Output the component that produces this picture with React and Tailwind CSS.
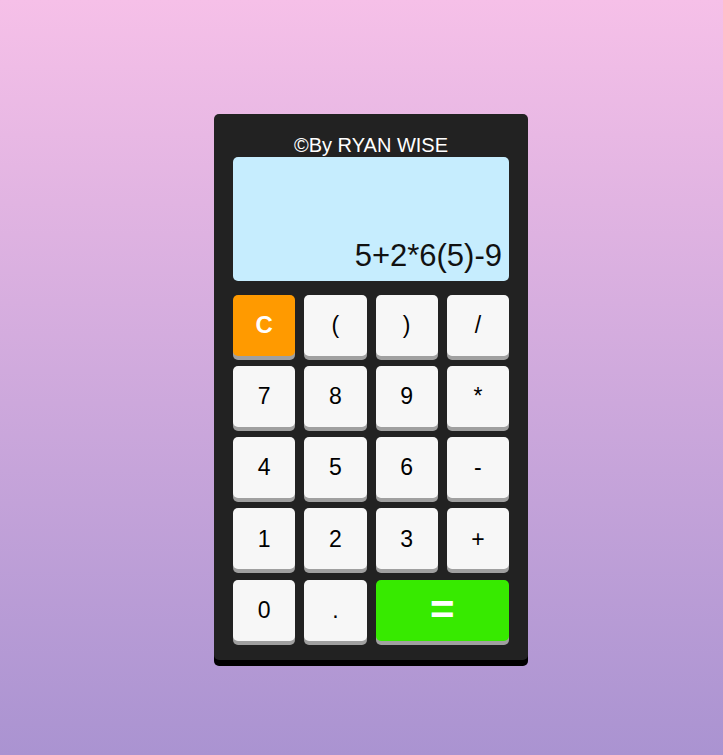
import React from "react";

const keys = [
  { l: "C", t: "op" },
  { l: "(" },
  { l: ")" },
  { l: "/" },
  { l: "7" },
  { l: "8" },
  { l: "9" },
  { l: "*" },
  { l: "4" },
  { l: "5" },
  { l: "6" },
  { l: "-" },
  { l: "1" },
  { l: "2" },
  { l: "3" },
  { l: "+" },
  { l: "0" },
  { l: "." },
  { l: "=", t: "eq" },
];

function Key({ k }) {
  if (k.t === "op") {
    return (
      <button className="h-[61px] rounded-[5px] bg-[#ff9a00] text-white font-bold text-[24px] shadow-[0_4px_0_#a0a0a0] flex items-center justify-center">
        {k.l}
      </button>
    );
  }
  if (k.t === "eq") {
    return (
      <button className="col-span-2 h-[61px] rounded-[5px] bg-[#37ea00] text-white font-bold text-[42px] leading-none shadow-[0_4px_0_#a0a0a0] flex items-center justify-center">
        {k.l}
      </button>
    );
  }
  return (
    <button className="h-[61px] rounded-[5px] bg-[#f7f7f7] text-black text-[23px] shadow-[0_4px_0_#a0a0a0] flex items-center justify-center">
      {k.l}
    </button>
  );
}

export default function App() {
  return (
    <div
      className="min-h-screen w-full bg-gradient-to-b from-[#f6c0e8] to-[#aa93d1] flex justify-center items-start pl-[19px] pt-[114px]"
      style={{ fontFamily: '"Liberation Sans", Arial, sans-serif' }}
    >
      <div className="w-[314px] bg-[#222222] rounded-[5px] shadow-[0_6px_0_#000] px-[19px] pt-[20px] pb-[19px] flex flex-col">
        <div className="text-white text-[20px] text-center leading-[22.5px]">©By RYAN WISE</div>
        <div className="h-[124px] bg-[#c6edfe] rounded-[5px] flex items-end justify-end pr-[7px] pb-[8px]">
          <span className="text-[31px] text-[#111] leading-[35px]">5+2*6(5)-9</span>
        </div>
        <div className="grid grid-cols-4 gap-x-[9px] gap-y-[10.25px] mt-[14px]">
          {keys.map((k, i) => (
            <Key key={i} k={k} />
          ))}
        </div>
      </div>
    </div>
  );
}
